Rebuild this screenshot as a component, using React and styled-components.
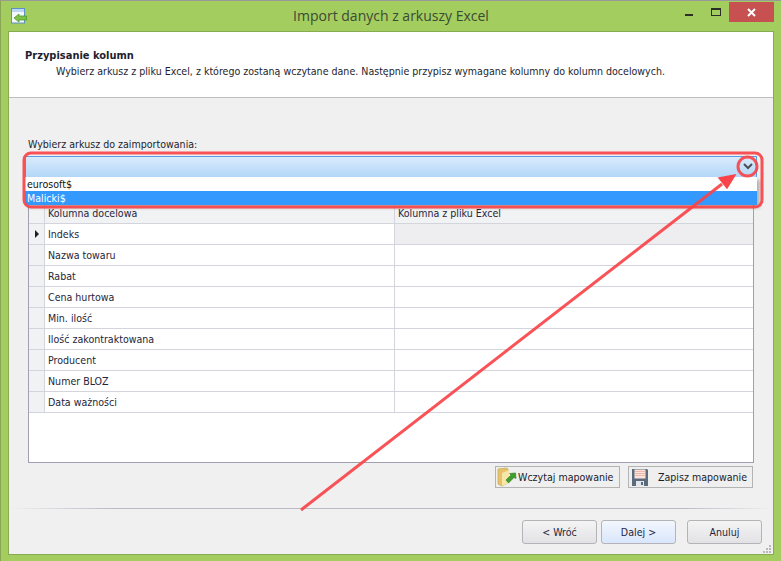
import styled, { createGlobalStyle } from 'styled-components';

const GlobalStyle = createGlobalStyle`
  html, body {
    margin: 0;
    padding: 0;
    background: #a3cd5e;
  }
  * {
    box-sizing: border-box;
  }
`;

const rows = [
  'Indeks',
  'Nazwa towaru',
  'Rabat',
  'Cena hurtowa',
  'Min. ilość',
  'Ilość zakontraktowana',
  'Producent',
  'Numer BLOZ',
  'Data ważności',
];

const FolderIcon = () => (
  <svg width="20" height="20" viewBox="0 0 20 20">
    <path d="M1 2 L9 1 L11 2 L11 16 L5 19 L1 17 Z" fill="#e6c36a" stroke="#c9a850" strokeWidth="0.7" />
    <path d="M5 6 L12 3 L12 16 L5 19 Z" fill="#f7e6a8" />
    <path d="M9 13 L14 8 L12.500 6.500 L18.500 6 L19 11.500 L17 10.500 L11.500 16 Z" fill="#3f9e2e" stroke="#2a7a1e" strokeWidth="0.6" />
  </svg>
);

const SaveIcon = () => (
  <svg width="16" height="17" viewBox="0 0 16 17">
    <path d="M0 0 H15 L16 1 V17 H0 Z" fill="#5a6b7d" />
    <rect x="2.500" y="0.500" width="11" height="9" fill="#fbe3dc" />
    <path d="M3 2.500 H13 M3 4.500 H13 M3 6.500 H13" stroke="#eeb9a9" strokeWidth="1" />
    <rect x="4" y="12" width="8" height="5" fill="#e4e7ea" />
    <rect x="9" y="13" width="2" height="3" fill="#5a6b7d" />
  </svg>
);

const AppIcon = () => (
  <svg width="16" height="16" viewBox="0 0 16 16">
    <rect x="0.500" y="0.500" width="13" height="14.500" fill="#f4f8fd" stroke="#5d8fc8" />
    <rect x="1" y="1" width="12" height="3" fill="#bcd7f2" />
    <path d="M3 10 L8 6 V8 H15.500 V12 H8 V14 Z" fill="#7fc24a" stroke="#4f9a2c" strokeWidth="0.8" />
  </svg>
);

const App = () => {
  return (
    <Frame>
      <GlobalStyle />
      <Titlebar>
        <AppIcon />
        <Title>Import danych z arkuszy Excel</Title>
        <WinControls>
          <Minimize />
          <Maximize />
          <CloseButton>
            <svg width="9" height="9" viewBox="0 0 9 9">
              <path d="M1 1 L8 8 M8 1 L1 8" stroke="#fff" strokeWidth="2" />
            </svg>
          </CloseButton>
        </WinControls>
      </Titlebar>
      <Client>
        <Header>
          <HeaderTitle>Przypisanie kolumn</HeaderTitle>
          <HeaderText>
            Wybierz arkusz z pliku Excel, z którego zostaną wczytane dane. Następnie przypisz wymagane kolumny do kolumn docelowych.
          </HeaderText>
        </Header>
        <Body>
          <FieldLabel>Wybierz arkusz do zaimportowania:</FieldLabel>
          <Combo>
            <ComboArrow>
              <svg width="10" height="7" viewBox="0 0 10 7">
                <path d="M1 1 L5 5 L9 1" fill="none" stroke="#4a4f57" strokeWidth="2" />
              </svg>
            </ComboArrow>
            <ComboList>
              <ComboItem>eurosoft$</ComboItem>
              <ComboItem $selected>Malicki$</ComboItem>
            </ComboList>
          </Combo>
          <Grid>
            <GridRow $head>
              <RowHead $head />
              <NameCell $head>Kolumna docelowa</NameCell>
              <ValueCell $head>Kolumna z pliku Excel</ValueCell>
            </GridRow>
            {rows.map((row, i) => (
              <GridRow key={row}>
                <RowHead>{i === 0 && <RowMarker />}</RowHead>
                <NameCell>{row}</NameCell>
                <ValueCell $active={i === 0} />
              </GridRow>
            ))}
          </Grid>
          <MappingBar>
            <MapButton>
              <FolderIcon />
              <span>Wczytaj mapowanie</span>
            </MapButton>
            <MapButton $wide>
              <SaveIcon />
              <span>Zapisz mapowanie</span>
            </MapButton>
          </MappingBar>
          <Divider />
          <Footer>
            <NavButton>&lt; Wróć</NavButton>
            <NavButton $primary>Dalej &gt;</NavButton>
            <NavButton $cancel>Anuluj</NavButton>
          </Footer>
          <Grip>
            <svg width="10" height="10" viewBox="0 0 10 10" fill="#b8b8b8">
              <rect x="7" y="1" width="2" height="2" />
              <rect x="4" y="4" width="2" height="2" />
              <rect x="7" y="4" width="2" height="2" />
              <rect x="1" y="7" width="2" height="2" />
              <rect x="4" y="7" width="2" height="2" />
              <rect x="7" y="7" width="2" height="2" />
            </svg>
          </Grip>
        </Body>
      </Client>
      <Annotation width="781" height="561" viewBox="0 0 781 561">
        <rect x="24" y="153" width="738" height="54" rx="7" fill="none" stroke="#f94449" strokeWidth="3" opacity="0.92" />
        <circle cx="747.500" cy="166.500" r="9.500" fill="none" stroke="#f94449" strokeWidth="3" opacity="0.92" />
        <path d="M301 510 L722 184" stroke="#f94449" strokeWidth="3" opacity="0.92" />
        <path d="M735 175 L719 178 L727 188 Z" fill="#f94449" stroke="#f94449" strokeWidth="1.500" />
      </Annotation>
    </Frame>
  );
};

const Frame = styled.div`
  position: relative;
  width: 781px;
  height: 561px;
  overflow: hidden;
  background: #a3cd5e;
  border-top: 1px solid #9a9a9a;
  border-left: 1px solid #87a552;
  padding: 0 7px 6px 7px;
  display: flex;
  flex-direction: column;
  font-family: 'DejaVu Sans Condensed', 'DejaVu Sans', sans-serif;
  font-stretch: condensed;
  font-size: 10.570px;
  color: #1e1e2e;
`;

const Titlebar = styled.div`
  position: relative;
  height: 30px;
  flex: none;
  display: flex;
  align-items: center;
  justify-content: center;
  padding-bottom: 1px;

  & > svg {
    position: absolute;
    left: 3px;
    top: 7px;
  }
`;

const Title = styled.div`
  font-family: 'Open Sans', sans-serif;
  font-stretch: normal;
  font-size: 14px;
  color: #3c4a36;
`;

const WinControls = styled.div`
  position: absolute;
  top: 1px;
  right: 0;
  display: flex;
  align-items: flex-start;
`;

const Minimize = styled.div`
  width: 8px;
  height: 2px;
  margin-top: 12px;
  margin-right: 18px;
  background: #2a2e26;
`;

const Maximize = styled.div`
  width: 10px;
  height: 8px;
  margin-top: 6px;
  margin-right: 8px;
  border: 1px solid #2a2e26;
  border-top-width: 2px;
`;

const CloseButton = styled.div`
  width: 45px;
  height: 20px;
  background: #c75050;
  display: flex;
  align-items: center;
  justify-content: center;
`;

const Client = styled.div`
  flex: 1;
  min-height: 0;
  display: flex;
  flex-direction: column;
  border: 1px solid #87ab50;
  background: #f0f0f0;
`;

const Header = styled.div`
  height: 66px;
  flex: none;
  background: #fff;
  border-bottom: 1px solid #bfbfbf;
  padding: 17px 16px 0;
`;

const HeaderTitle = styled.div`
  font-size: 11px;
  font-weight: 700;
  line-height: 14px;
`;

const HeaderText = styled.div`
  margin: 1px 0 0 31px;
  line-height: 14px;
  white-space: nowrap;
`;

const Body = styled.div`
  position: relative;
  flex: 1;
  min-height: 0;
  padding: 40px 0 0 19px;
  display: flex;
  flex-direction: column;
`;

const FieldLabel = styled.div`
  height: 18px;
  line-height: 12px;
  white-space: nowrap;
`;

const Combo = styled.div`
  position: relative;
  z-index: 2;
  flex: none;
  width: 732px;
  height: 22px;
  margin-left: -3px;
  border: 1px solid #569de5;
  background: linear-gradient(#d9ebfc, #b3d7f8);
`;

const ComboArrow = styled.div`
  position: absolute;
  right: 3px;
  top: 6px;
  display: flex;
`;

const ComboList = styled.div`
  position: absolute;
  left: -1px;
  right: -1px;
  top: 20px;
  height: 28px;
  background: #fff;
  box-shadow: 3px 3px 3px rgba(0, 0, 0, 0.25);
`;

const ComboItem = styled.div`
  height: 14px;
  line-height: ${(p) => (p.$selected ? 14 : 15)}px;
  padding-left: 2px;
  color: ${(p) => (p.$selected ? '#fff' : '#111')};
  background: ${(p) => (p.$selected ? '#3399ff' : '#fff')};
`;

const Grid = styled.div`
  flex: none;
  width: 726px;
  height: 260px;
  margin-top: 25px;
  background: #fff;
  border: 1px solid #a0a0b0;
  border-top: none;
`;

const GridRow = styled.div`
  display: flex;
  height: 21px;
  border-bottom: 1px solid #d4d4dc;
  background: ${(p) => (p.$head ? '#f1f2f4' : '#fff')};
`;

const RowHead = styled.div`
  width: 16px;
  flex: none;
  background: #f1f2f4;
  border-right: 1px solid #d4d4dc;
  display: flex;
  align-items: center;
  justify-content: center;
`;

const RowMarker = styled.div`
  width: 0;
  height: 0;
  border-left: 4px solid #1e1e28;
  border-top: 4px solid transparent;
  border-bottom: 4px solid transparent;
`;

const NameCell = styled.div`
  width: 350px;
  flex: none;
  padding-left: 3px;
  line-height: 20px;
  white-space: nowrap;
  border-right: 1px solid #d4d4dc;
  color: #25253a;
`;

const ValueCell = styled.div`
  flex: 1;
  padding-left: 3px;
  line-height: 20px;
  white-space: nowrap;
  color: #25253a;
  background: ${(p) => (p.$active ? '#eeeef0' : 'transparent')};
`;

const MappingBar = styled.div`
  flex: none;
  width: 725px;
  margin-top: 3px;
  display: flex;
  justify-content: flex-end;
  gap: 8px;
`;

const MapButton = styled.div`
  width: 125px;
  height: 22px;
  display: flex;
  align-items: center;
  gap: ${(p) => (p.$wide ? 10 : 1)}px;
  padding-left: ${(p) => (p.$wide ? 3 : 1)}px;
  background: #efefef;
  border: 1px solid #b4b4b4;
  white-space: nowrap;
  color: #1c1c28;
`;

const Divider = styled.div`
  flex: none;
  height: 1px;
  margin: 20px 0 0 -19px;
  background: linear-gradient(90deg, #f0f0f0 0, #b9bac6 14%, #b9bac6 88%, #f0f0f0 100%);
`;

const Footer = styled.div`
  flex: none;
  margin-top: 11px;
  padding-right: 11px;
  display: flex;
  justify-content: flex-end;
  gap: 4px;
`;

const NavButton = styled.div`
  width: 75px;
  height: 24px;
  margin-left: ${(p) => (p.$cancel ? 7 : 0)}px;
  border: 1px solid #b4b4b8;
  border-radius: 3px;
  display: flex;
  align-items: center;
  justify-content: center;
  color: #25253a;
  background: ${(p) =>
    p.$primary ? 'linear-gradient(#f3f7fe, #d9e6fb)' : 'linear-gradient(#f4f4f4, #e2e2e6)'};
`;

const Grip = styled.div`
  position: absolute;
  right: 1px;
  bottom: 0;
  display: flex;
`;

const Annotation = styled.svg`
  position: absolute;
  left: -1px;
  top: -1px;
  z-index: 5;
  pointer-events: none;
`;

export default App;
